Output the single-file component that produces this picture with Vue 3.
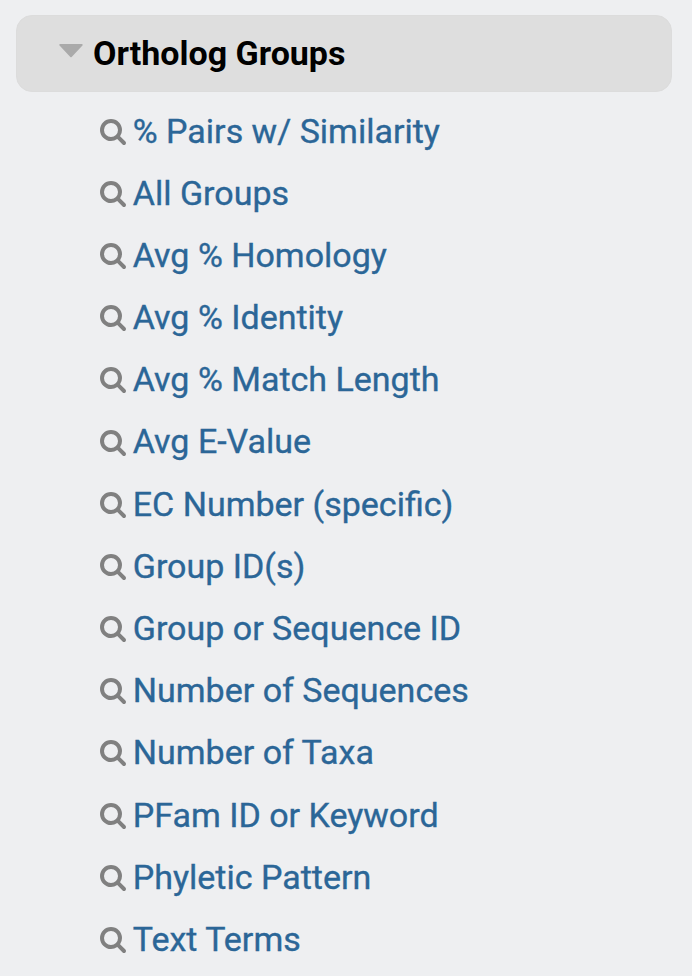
<script setup>
const searches = [
  '% Pairs w/ Similarity',
  'All Groups',
  'Avg % Homology',
  'Avg % Identity',
  'Avg % Match Length',
  'Avg E-Value',
  'EC Number (specific)',
  'Group ID(s)',
  'Group or Sequence ID',
  'Number of Sequences',
  'Number of Taxa',
  'PFam ID or Keyword',
  'Phyletic Pattern',
  'Text Terms',
]
</script>

<template>
  <nav class="panel">
    <div class="header">
      <svg class="caret" viewBox="0 0 24 14"><path d="M1.2 .9H22.800L12 12.400Z" /></svg>
      <span class="title">Ortholog Groups</span>
    </div>
    <ul class="list">
      <li v-for="name in searches" :key="name" class="item">
        <svg class="icon" viewBox="0 0 1664 1664">
          <path d="M1152 704q0-185-131.500-316.500T704 256 387.500 387.500 256 704t131.500 316.500T704 1152t316.500-131.500T1152 704zm512 832q0 52-38 90t-90 38q-54 0-90-38l-343-342q-179 124-399 124-143 0-273.500-55.500t-225-150-150-225T0 704t55.500-273.500 150-225 225-150T704 0t273.500 55.500 225 150 150 225T1408 704q0 220-124 399l343 343q37 37 37 90z" />
        </svg>
        <a class="link">{{ name }}</a>
      </li>
    </ul>
  </nav>
</template>

<style>
body {
  background: #eeeff1;
}
</style>

<style scoped>
.panel {
  box-sizing: border-box;
  height: 976px;
  padding: 15px 20px 0 16px;
  overflow: hidden;
  background: #eeeff1;
  font-family: Roboto, sans-serif;
}
.header {
  display: flex;
  align-items: center;
  box-sizing: border-box;
  height: 77px;
  padding: 0 0 2px 42px;
  border: 1px solid #dcdcdc;
  border-radius: 16px;
  background: #dedede;
}
.caret {
  width: 24px;
  height: 14px;
  margin: 0 10px 3px 0;
  fill: #aaa;
  stroke: #aaa;
  stroke-width: 1.8;
  stroke-linejoin: round;
}
.title {
  font-size: 34px;
  font-weight: 700;
  line-height: 40px;
  color: #000;
  white-space: nowrap;
}
.list {
  margin: 0;
  padding: 7.42px 0 0 84px;
  list-style: none;
}
.item {
  display: flex;
  align-items: center;
  height: 62.19px;
}
.icon {
  flex: none;
  width: 26px;
  height: 26px;
  margin: 2.2px 6.75px 0 0;
  fill: #808080;
}
.link {
  font-size: 34px;
  line-height: 40px;
  color: #2b6697;
  white-space: nowrap;
  -webkit-text-stroke: 0.35px #2b6697;
}
</style>
